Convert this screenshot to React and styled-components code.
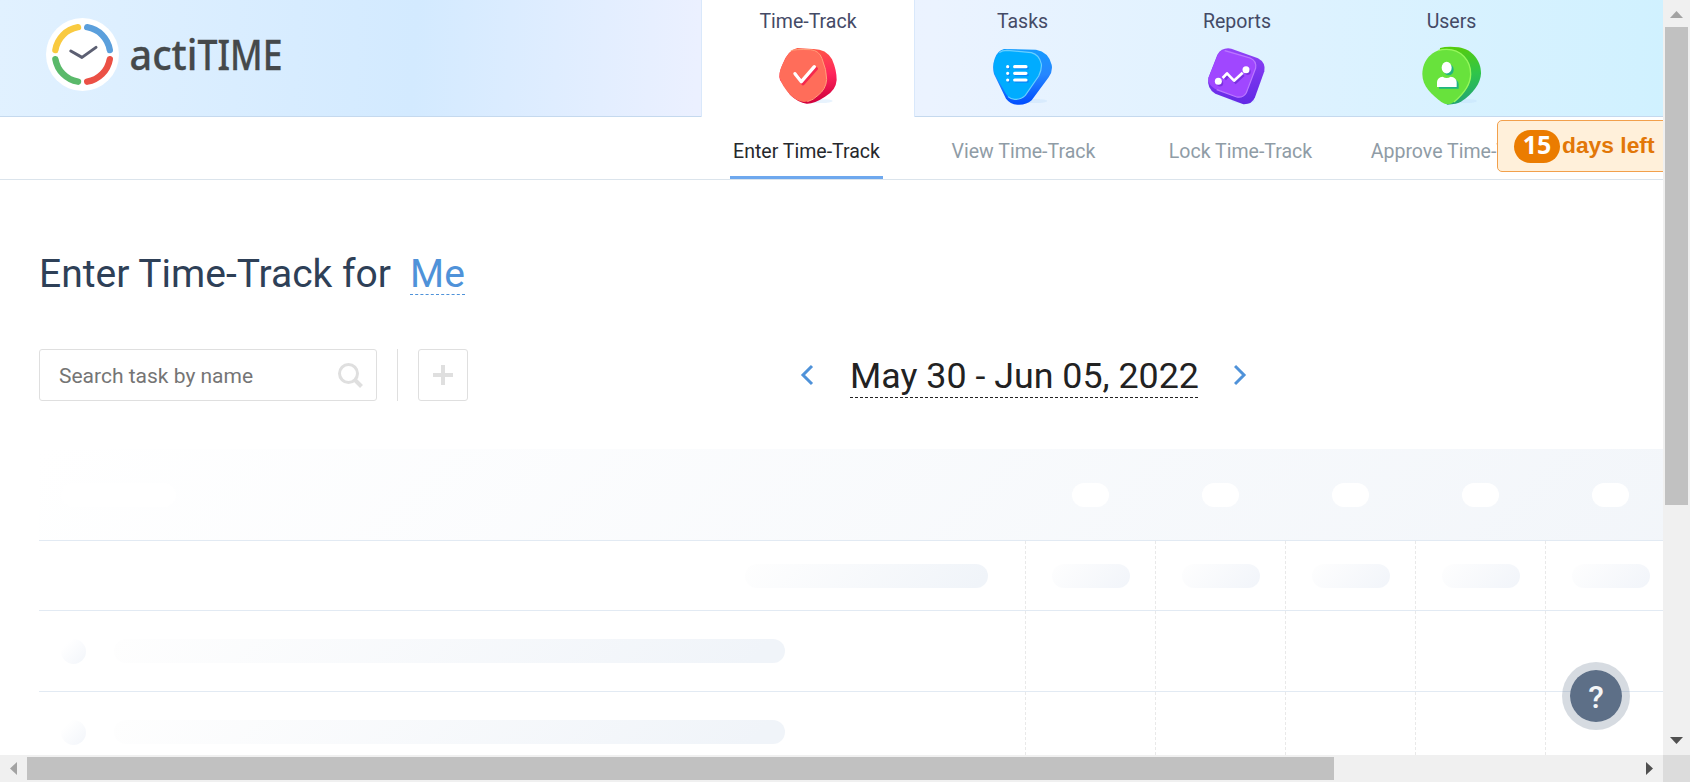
import React from "react";
import styled, { createGlobalStyle, css } from "styled-components";

const Global = createGlobalStyle`
  * { box-sizing: border-box; }
  html, body { margin: 0; padding: 0; background: #fff; overflow: hidden; }
  body { font-family: Roboto, "Liberation Sans", sans-serif; }
`;

const Window = styled.div`
  width: 1690px;
  height: 782px;
  display: grid;
  grid-template-columns: 1663px 27px;
  grid-template-rows: 755px 27px;
  overflow: hidden;
`;

const Page = styled.div`
  position: relative;
  overflow: hidden;
  background: #fff;
`;

const Header = styled.header`
  height: 117px;
  display: flex;
  border-bottom: 1px solid #c5d9ee;
  background: linear-gradient(93deg, #e1f1ff 0%, #d3eaff 25%, #ebf0ff 42%, #ebf3ff 56%, #d0f1ff 100%);
`;

const Brand = styled.a`
  width: 701px;
  padding: 18px 0 0 46px;
  display: flex;
  align-items: flex-start;
`;

const LogoArt = styled.svg`
  width: 260px;
  height: 90px;
  overflow: visible;
`;

const Tabs = styled.nav`
  display: grid;
  grid-template-columns: 214px 215px 214px 215px;
`;

const Tab = styled.a`
  display: flex;
  flex-direction: column;
  align-items: center;
  height: 116px;
  padding-top: 10px;
  font-size: 19.5px;
  line-height: 24px;
  color: #444a66;
  ${(p) =>
    p.$active &&
    css`
      height: 117px;
      background: #fff;
      border: solid #d9e8fb;
      border-width: 0 1px;
    `}
`;

const TabIcon = styled.svg`
  width: 66px;
  height: 62px;
  margin-top: 11px;
`;

const SubNav = styled.nav`
  height: 63px;
  padding-left: 698px;
  display: flex;
  border-bottom: 1px solid #dbe4ec;
`;

const SubItem = styled.div`
  flex: 0 0 217px;
  display: flex;
  justify-content: center;
`;

const SubLink = styled.a`
  height: 62px;
  padding: 23px 3px 0;
  font-size: 19.55px;
  line-height: 24px;
  white-space: nowrap;
  color: ${(p) => (p.$active ? "#26282c" : "#8f9ca6")};
  border-bottom: 3px solid ${(p) => (p.$active ? "#6ea8ee" : "transparent")};
`;

const TrialBadge = styled.div`
  position: absolute;
  left: 1497px;
  top: 120px;
  width: 180px;
  height: 52px;
  padding: 9px 0 0 16px;
  display: flex;
  align-items: flex-start;
  border: 1px solid #f2a04c;
  border-radius: 5px;
  background: #fff0da;
`;

const TrialCount = styled.span`
  width: 46px;
  height: 33px;
  border-radius: 17px;
  background: #eb7c00;
  color: #fff;
  font: 700 25px/29px "Open Sans", sans-serif;
  text-align: center;
`;

const TrialText = styled.span`
  margin-left: 2px;
  padding-top: 2px;
  font: 700 22.8px/26px "Liberation Sans", sans-serif;
  color: #e27708;
  white-space: nowrap;
`;

const Title = styled.h1`
  margin: 68px 0 0 39px;
  height: 47px;
  display: flex;
  font-size: 39px;
  line-height: 53px;
  font-weight: 400;
  color: #2e4057;
`;

const UserPick = styled.a`
  margin-left: 19px;
  height: 47px;
  color: #4f92d9;
  border-bottom: 1px dashed #4f92d9;
`;

const Toolbar = styled.div`
  height: 52px;
  margin: 54px 0 48px 39px;
  display: flex;
`;

const SearchBox = styled.label`
  width: 338px;
  height: 52px;
  padding: 0 13px 0 19px;
  display: flex;
  align-items: center;
  justify-content: space-between;
  border: 1px solid #dfdfdf;
  border-radius: 3px;
`;

const SearchHint = styled.span`
  padding-top: 2px;
  font-size: 21px;
  color: #757575;
`;

const Divider = styled.i`
  width: 1px;
  height: 52px;
  margin: 0 20px;
  background: #dfdfdf;
`;

const AddButton = styled.button`
  width: 50px;
  height: 52px;
  padding: 0;
  display: flex;
  align-items: center;
  justify-content: center;
  background: #fff;
  border: 1px solid #dfdfdf;
  border-radius: 3px;
`;

const DateRange = styled.div`
  margin-left: 332px;
  display: flex;
  align-items: flex-start;
`;

const Arrow = styled.svg`
  width: 14px;
  height: 22px;
  margin-top: 15px;
`;

const DateText = styled.a`
  width: 348px;
  height: 49px;
  margin: 0 36px;
  font-size: 35.8px;
  line-height: 54px;
  white-space: nowrap;
  color: #222;
  border-bottom: 1px dashed #222;
`;

const Sheet = styled.div`
  width: 1969px;
  margin-left: 39px;
`;

const Row = styled.div`
  display: grid;
  grid-template-columns: 986px repeat(6, 130px);
  height: ${(p) => p.$height}px;
  border-bottom: 1px solid #e2eaf3;
  background: ${(p) => (p.$head ? "linear-gradient(135deg, #ffffff 0%, #f0f4f9 100%)" : "none")};
`;

const NameCell = styled.div`
  display: flex;
  align-items: center;
  justify-content: ${(p) => (p.$end ? "flex-end" : "flex-start")};
  padding: ${(p) => (p.$end ? "0 37px 0 0" : "0 0 0 22px")};
`;

const DayCell = styled.div`
  display: flex;
  align-items: center;
  justify-content: ${(p) => (p.$head ? "center" : "flex-end")};
  padding-right: ${(p) => (p.$head ? 0 : 25)}px;
  ${(p) =>
    !p.$head &&
    css`
      background: repeating-linear-gradient(to bottom, #e9e9e9 0 3px, transparent 3px 5px) 0 0 / 1px 100% no-repeat;
    `}
`;

const Pill = styled.span`
  width: ${(p) => p.$width}px;
  height: 24px;
  border-radius: 12px;
  background: ${(p) => (p.$blank ? "#fff" : `linear-gradient(135deg, #fefefe, ${p.$to || "#f0f4f9"} 95%)`)};
`;

const Dot = styled.span`
  width: 25px;
  height: 25px;
  margin-right: 28px;
  border-radius: 50%;
  background: linear-gradient(135deg, #ffffff 20%, #f2f5fa 100%);
`;

const Help = styled.button`
  position: absolute;
  left: 1562px;
  top: 662px;
  width: 68px;
  height: 68px;
  padding: 2px 0 0;
  border: 8px solid rgba(93, 111, 135, 0.25);
  border-radius: 50%;
  background: #5d6f87 padding-box;
  color: #f4f6f8;
  font: 500 32px/50px Roboto, sans-serif;
  text-align: center;
`;

const VScroll = styled.div`
  display: flex;
  flex-direction: column;
  justify-content: space-between;
  padding: 0 2px;
  background: #f0f0f0;
`;

const HScroll = styled.div`
  display: flex;
  justify-content: space-between;
  padding: 2px 0;
  background: #f0f0f0;
`;

const VThumb = styled.div`
  height: 478px;
  margin-bottom: auto;
  background: #c1c1c1;
`;

const HThumb = styled.div`
  width: 1307px;
  margin-right: auto;
  background: #c1c1c1;
`;

const VArrow = styled.svg`
  display: block;
  width: 23px;
  height: 27px;
`;

const HArrow = styled.svg`
  display: block;
  width: 27px;
  height: 23px;
`;

const Corner = styled.div`
  background: #dcdcdc;
`;

const Logo = () => (
  <LogoArt viewBox="46 18 260 90">
    <circle cx="82.5" cy="54.5" r="36.5" fill="#fff" />
    <g fill="none" strokeWidth="6.4" strokeLinecap="round">
      <path d="M55.4 50A27.6 27.6 0 0 1 78 27.2" stroke="#f9ca40" />
      <path d="M87.2 27.2A27.6 27.6 0 0 1 109.8 50" stroke="#5b9fdc" />
      <path d="M109.8 59.2A27.6 27.6 0 0 1 87.2 81.7" stroke="#eb5045" />
      <path d="M78 81.7A27.6 27.6 0 0 1 55.4 59.2" stroke="#5ab96a" />
    </g>
    <path d="M70.8 51L82 57.4L96 47.4" fill="none" stroke="#5c5f72" strokeWidth="3" strokeLinecap="round" strokeLinejoin="round" />
    <g fontFamily="Noto Sans, sans-serif" fontWeight="500" fontSize="41" fill="#45494b" stroke="#45494b" strokeWidth="0.3">
      <text x="129.5" y="69.5" textLength="68" lengthAdjust="spacingAndGlyphs">
        acti
      </text>
      <text x="197.5" y="69.5" textLength="85" lengthAdjust="spacingAndGlyphs">
        TIME
      </text>
    </g>
  </LogoArt>
);

const Grad = ({ id, stops }) => (
  <linearGradient id={id} x1="0.4" y1="0" x2="0.5" y2="1">
    {stops.map((c, i) => (
      <stop key={c} offset={i / (stops.length - 1)} stopColor={c} />
    ))}
  </linearGradient>
);

const Shade = ({ cx }) => <ellipse cx={cx} cy="303" rx="36" ry="6" fill="#bcdcf8" opacity="0.35" />;

const TimeIcon = () => (
  <TabIcon viewBox="255 135 198 186">
    <Grad id="red" stops={["#ff5a45", "#ff265c", "#d0003c"]} />
    <Shade cx={392} />
    <path d="M322 144L368 147Q408 146 426 178Q440 210 440 240Q438 272 405 290Q372 312 350 311Q325 308 300 284L270 240Q264 222 278 192Q294 150 322 144Z" fill="url(#red)" />
    <path d="M322 147L362 149Q388 152 396 176Q410 210 410 238Q408 268 384 286Q360 306 342 306Q322 304 304 288Q274 256 268 230Q268 210 280 188Q296 150 322 147Z" fill="#ff6d5a" />
    <path d="M302 153Q312 147 362 149Q388 152 396 176Q410 210 410 238Q408 268 384 286Q370 300 352 305" fill="none" stroke="#ffa07a" strokeWidth="3" />
    <path d="M320 226L339 251L379 206" fill="none" stroke="#f5284e" strokeWidth="10" strokeLinecap="round" strokeLinejoin="round" />
    <path d="M315 221L334 245L373 200" fill="none" stroke="#fff" strokeWidth="10" strokeLinecap="round" strokeLinejoin="round" />
  </TabIcon>
);

const TasksIcon = () => (
  <TabIcon viewBox="900 135 198 186">
    <Grad id="blue" stops={["#149cff", "#2687ff", "#004cff"]} />
    <Shade cx={1036} />
    <path d="M942 147L1038 149Q1076 156 1085 194Q1089 214 1076 232L1025 301Q1008 316 982 314Q960 312 948 296L912 222Q906 198 914 176Q922 152 942 147Z" fill="url(#blue)" />
    <path d="M942 149L1024 158Q1048 164 1054 192Q1056 208 1046 228L1006 286Q994 298 974 298Q956 296 948 282L914 222Q907 198 915 178Q924 154 942 149Z" fill="#00acff" />
    <path d="M928 158Q936 151 952 151L1024 158Q1048 164 1054 192Q1056 208 1046 228L1006 286Q994 298 974 298Q962 297 954 290" fill="none" stroke="#68cfff" strokeWidth="3.5" />
    <g stroke="#0b86f7" strokeWidth="9" strokeLinecap="round">
      <path d="M956 204h.1M956 224h.1M956 244h.1M978 204h34M978 224h34M978 244h34" />
    </g>
    <g stroke="#fff" strokeWidth="9.5" strokeLinecap="round">
      <path d="M953 200h.1M953 220h.1M953 240h.1M974 200h34M974 220h34M974 240h34" />
    </g>
  </TabIcon>
);

const ReportsIcon = () => (
  <TabIcon viewBox="342 135 198 186">
    <Grad id="violet" stops={["#9245f7", "#7a35ee", "#6329e5"]} />
    <Shade cx={460} />
    <path d="M424 146L504 175Q528 188 523 214L495 292Q486 314 460 313L376 281Q350 266 355 234L382 164Q396 141 424 146Z" fill="url(#violet)" />
    <path d="M412 150L480 172Q500 182 497 204L469 278Q460 294 440 291L374 266Q352 254 356 232L382 168Q394 146 412 150Z" fill="#a047ff" />
    <path d="M404 152L480 174Q500 182 497 204L469 278Q460 294 440 291L380 269" fill="none" stroke="#bb78ff" strokeWidth="3.5" />
    <g transform="translate(5 6)" stroke="#7930df" fill="#7930df">
      <path d="M400 232L411 220L432 241L456 219" fill="none" strokeWidth="8" />
      <circle cx="385" cy="244" r="9" />
      <circle cx="468" cy="209" r="9" />
    </g>
    <path d="M398 234L411 220L432 242L458 218" fill="none" stroke="#fff" strokeWidth="8" strokeLinejoin="round" />
    <circle cx="385" cy="244" r="10.5" fill="#fff" />
    <circle cx="468" cy="209" r="10.5" fill="#fff" />
  </TabIcon>
);

const UsersIcon = () => (
  <TabIcon viewBox="177 135 198 186">
    <Grad id="green" stops={["#56cc0c", "#2fc54a", "#22a375"]} />
    <Shade cx={315} />
    <path d="M240 144Q262 138 296 142C336 148 363 182 363 220C362 250 340 280 305 304Q290 314 262 314L230 290Z" fill="url(#green)" />
    <path d="M260 147C302 147 333 180 333 222C333 258 308 284 282 306Q264 320 244 306C216 284 187 260 187 222C187 180 218 147 260 147Z" fill="#68e23c" />
    <path d="M234 152Q246 148 260 148C302 148 332 180 332 222C332 258 308 284 282 306" fill="none" stroke="#96f75c" strokeWidth="4" />
    <g transform="translate(6 6)" fill="#20b580">
      <ellipse cx="260" cy="203" rx="15" ry="17" />
      <path d="M231 260V246Q232 232 250 230Q260 236 270 230Q289 232 290 246V260Z" />
    </g>
    <g fill="#fff">
      <ellipse cx="260" cy="203" rx="15" ry="17.5" />
      <path d="M231 261V246Q232 232 248 230Q260 238 272 230Q289 232 290 246V261Z" />
    </g>
  </TabIcon>
);

const tabs = [
  { name: "Time-Track", Icon: TimeIcon, active: true },
  { name: "Tasks", Icon: TasksIcon },
  { name: "Reports", Icon: ReportsIcon },
  { name: "Users", Icon: UsersIcon },
];

const views = ["Enter Time-Track", "View Time-Track", "Lock Time-Track", "Approve Time-Track"];
const days = [0, 1, 2, 3, 4, 5];

export default function App() {
  return (
    <Window>
      <Global />
      <Page>
        <Header>
          <Brand>
            <Logo />
          </Brand>
          <Tabs>
            {tabs.map(({ name, Icon, active }) => (
              <Tab key={name} $active={active}>
                {name}
                <Icon />
              </Tab>
            ))}
          </Tabs>
        </Header>
        <SubNav>
          {views.map((v, i) => (
            <SubItem key={v}>
              <SubLink $active={i === 0}>{v}</SubLink>
            </SubItem>
          ))}
        </SubNav>
        <TrialBadge>
          <TrialCount>15</TrialCount>
          <TrialText>days left</TrialText>
        </TrialBadge>

        <Title>
          Enter Time-Track for <UserPick>Me</UserPick>
        </Title>

        <Toolbar>
          <SearchBox>
            <SearchHint>Search task by name</SearchHint>
            <svg width="26" height="26" viewBox="0 0 26 26" fill="none" stroke="#dfdfdf">
              <circle cx="11.5" cy="11.5" r="9" strokeWidth="3" />
              <path d="M18 18L24.5 24.5" strokeWidth="4" />
            </svg>
          </SearchBox>
          <Divider />
          <AddButton>
            <svg width="20" height="20" viewBox="0 0 20 20" fill="#dfdfdf">
              <path d="M8 0h4v8h8v4h-8v8h-4v-8h-8v-4h8z" />
            </svg>
          </AddButton>
          <DateRange>
            <Arrow viewBox="0 0 14 22" fill="none" stroke="#4f92d9" strokeWidth="3">
              <path d="M12 2L3 11L12 20" />
            </Arrow>
            <DateText>May 30 - Jun 05, 2022</DateText>
            <Arrow viewBox="0 0 14 22" fill="none" stroke="#4f92d9" strokeWidth="3">
              <path d="M1 2L10 11L1 20" />
            </Arrow>
          </DateRange>
        </Toolbar>

        <Sheet>
          <Row $height={92} $head>
            <NameCell>
              <Pill $width={115} $blank />
            </NameCell>
            {days.map((d) => (
              <DayCell key={d} $head>
                <Pill $width={37} $blank />
              </DayCell>
            ))}
          </Row>
          <Row $height={70}>
            <NameCell $end>
              <Pill $width={243} />
            </NameCell>
            {days.map((d) => (
              <DayCell key={d}>
                <Pill $width={78} $to="#f2f5fa" />
              </DayCell>
            ))}
          </Row>
          {[0, 1].map((r) => (
            <Row key={r} $height={81}>
              <NameCell>
                <Dot />
                <Pill $width={671} />
              </NameCell>
              {days.map((d) => (
                <DayCell key={d} />
              ))}
            </Row>
          ))}
        </Sheet>

        <Help>?</Help>
      </Page>
      <VScroll>
        <VArrow viewBox="0 0 23 27">
          <path d="M5 18L11.5 11L18 18Z" fill="#a3a3a3" />
        </VArrow>
        <VThumb />
        <VArrow viewBox="0 0 23 27">
          <path d="M5 9L11.5 16L18 9Z" fill="#505050" />
        </VArrow>
      </VScroll>
      <HScroll>
        <HArrow viewBox="0 0 27 23">
          <path d="M17 5L10 11.5L17 18Z" fill="#a3a3a3" />
        </HArrow>
        <HThumb />
        <HArrow viewBox="0 0 27 23">
          <path d="M10 5L17 11.5L10 18Z" fill="#505050" />
        </HArrow>
      </HScroll>
      <Corner />
    </Window>
  );
}
